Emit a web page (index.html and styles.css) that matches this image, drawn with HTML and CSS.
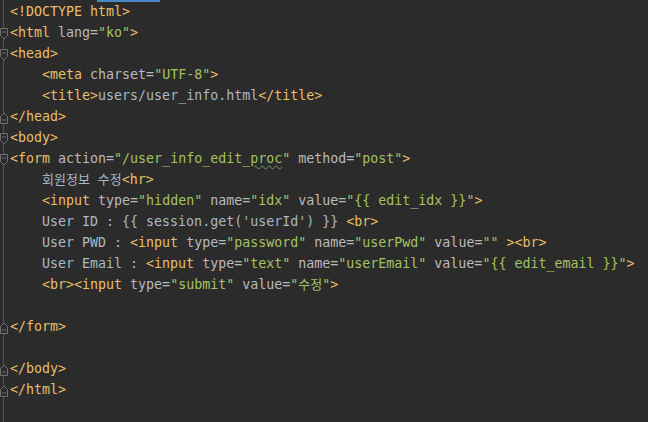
FILE: index.html
```html
<!DOCTYPE html>
<html lang="ko">
<head>
<meta charset="UTF-8">
<title>user_info.html</title>
<link rel="stylesheet" href="styles.css">
</head>
<body>
<div class="tab-indicator"></div>
<div class="editor">
  <div class="line"><span class="g"></span><span class="code"><span class="t">&lt;!DOCTYPE html&gt;</span></span></div>
  <div class="line"><span class="g"><svg class="fold" viewBox="0 0 8 12" width="8" height="12"><path d="M0.5 0.5H7.5V7.5L4 11L0.5 7.5Z"/><path d="M2 4H6"/></svg></span><span class="code"><span class="t">&lt;html </span><span class="a">lang=</span><span class="v">"ko"</span><span class="t">&gt;</span></span></div>
  <div class="line"><span class="g"><svg class="fold" viewBox="0 0 8 12" width="8" height="12"><path d="M0.5 0.5H7.5V7.5L4 11L0.5 7.5Z"/><path d="M2 4H6"/></svg></span><span class="code"><span class="t">&lt;head&gt;</span></span></div>
  <div class="line"><span class="g"></span><span class="code">    <span class="t">&lt;meta </span><span class="a">charset=</span><span class="v">"UTF-8"</span><span class="t">&gt;</span></span></div>
  <div class="line"><span class="g"></span><span class="code">    <span class="t">&lt;title&gt;</span>users/user_info.html<span class="t">&lt;/title&gt;</span></span></div>
  <div class="line"><span class="g"><svg class="fold" viewBox="0 0 8 12" width="8" height="12"><path d="M0.5 11.5H7.5V4.5L4 1L0.5 4.5Z"/><path d="M2 8H6"/></svg></span><span class="code"><span class="t">&lt;/head&gt;</span></span></div>
  <div class="line"><span class="g"><svg class="fold" viewBox="0 0 8 12" width="8" height="12"><path d="M0.5 0.5H7.5V7.5L4 11L0.5 7.5Z"/><path d="M2 4H6"/></svg></span><span class="code"><span class="t">&lt;body&gt;</span></span></div>
  <div class="line"><span class="g"><svg class="fold" viewBox="0 0 8 12" width="8" height="12"><path d="M0.5 0.5H7.5V7.5L4 11L0.5 7.5Z"/><path d="M2 4H6"/></svg></span><span class="code"><span class="t">&lt;form </span><span class="a">action=</span><span class="v">"/user_info_edit_<span class="typo">proc</span>"</span> <span class="a">method=</span><span class="v">"post"</span><span class="t">&gt;</span></span></div>
  <div class="line"><span class="g"></span><span class="code">    <span class="ko">회원정보 수정</span><span class="t">&lt;hr&gt;</span></span></div>
  <div class="line"><span class="g"></span><span class="code">    <span class="t">&lt;input </span><span class="a">type=</span><span class="v">"hidden"</span> <span class="a">name=</span><span class="v">"idx"</span> <span class="a">value=</span><span class="v">"{{ edit_idx }}"</span><span class="t">&gt;</span></span></div>
  <div class="line"><span class="g"></span><span class="code">    User ID : {{ session.get('userId') }} <span class="t">&lt;br&gt;</span></span></div>
  <div class="line"><span class="g"></span><span class="code">    User PWD : <span class="t">&lt;input </span><span class="a">type=</span><span class="v">"password"</span> <span class="a">name=</span><span class="v">"userPwd"</span> <span class="a">value=</span><span class="v">""</span> <span class="t">&gt;&lt;br&gt;</span></span></div>
  <div class="line"><span class="g"></span><span class="code">    User Email : <span class="t">&lt;input </span><span class="a">type=</span><span class="v">"text"</span> <span class="a">name=</span><span class="v">"userEmail"</span> <span class="a">value=</span><span class="v">"{{ edit_email }}"</span><span class="t">&gt;</span></span></div>
  <div class="line"><span class="g"></span><span class="code">    <span class="t">&lt;br&gt;&lt;input </span><span class="a">type=</span><span class="v">"submit"</span> <span class="a">value=</span><span class="v">"<span class="ko">수정</span>"</span><span class="t">&gt;</span></span></div>
  <div class="line"><span class="g"></span><span class="code"></span></div>
  <div class="line"><span class="g"><svg class="fold" viewBox="0 0 8 12" width="8" height="12"><path d="M0.5 11.5H7.5V4.5L4 1L0.5 4.5Z"/><path d="M2 8H6"/></svg></span><span class="code"><span class="t">&lt;/form&gt;</span></span></div>
  <div class="line"><span class="g"></span><span class="code"></span></div>
  <div class="line"><span class="g"><svg class="fold" viewBox="0 0 8 12" width="8" height="12"><path d="M0.5 11.5H7.5V4.5L4 1L0.5 4.5Z"/><path d="M2 8H6"/></svg></span><span class="code"><span class="t">&lt;/body&gt;</span></span></div>
  <div class="line"><span class="g"><svg class="fold" viewBox="0 0 8 12" width="8" height="12"><path d="M0.5 11.5H7.5V4.5L4 1L0.5 4.5Z"/><path d="M2 8H6"/></svg></span><span class="code"><span class="t">&lt;/html&gt;</span></span></div>
</div>
</body>
</html>
```

FILE: styles.css
```css
html, body {
  margin: 0;
  padding: 0;
  background: #2b2b2b;
  height: 100%;
  overflow: hidden;
}

.tab-indicator {
  position: absolute;
  left: 97px;
  top: 0;
  width: 63px;
  height: 2px;
  background: #4a88c7;
}

.editor {
  display: flex;
  flex-direction: column;
  min-height: 422px;
  box-sizing: border-box;
  padding-top: 1px;
  background: linear-gradient(to right, transparent 3px, #555555 3px, #555555 4px, transparent 4px);
  font-family: "DejaVu Sans Mono", "Noto Sans CJK KR", monospace;
  font-size: 13.3px;
  color: #a9b7c6;
}

.line {
  display: flex;
  height: 21px;
  line-height: 21px;
}

.g {
  width: 10px;
  flex: none;
  display: flex;
  align-items: flex-start;
  padding-top: 6px;
  box-sizing: border-box;
}

.fold {
  display: block;
  fill: #2b2b2b;
  stroke: #6f6f6f;
  stroke-width: 1;
}

.code {
  white-space: pre;
}

.t { color: #e8bf6a; }
.a { color: #bababa; }
.v { color: #a5c261; }

.ko {
  font-family: "DejaVu Sans Mono", "Noto Sans CJK KR", monospace;
  font-size: 13px;
}

.typo {
  text-decoration: underline wavy #659c6b;
  text-decoration-thickness: 1px;
  text-underline-offset: 2px;
}
```
